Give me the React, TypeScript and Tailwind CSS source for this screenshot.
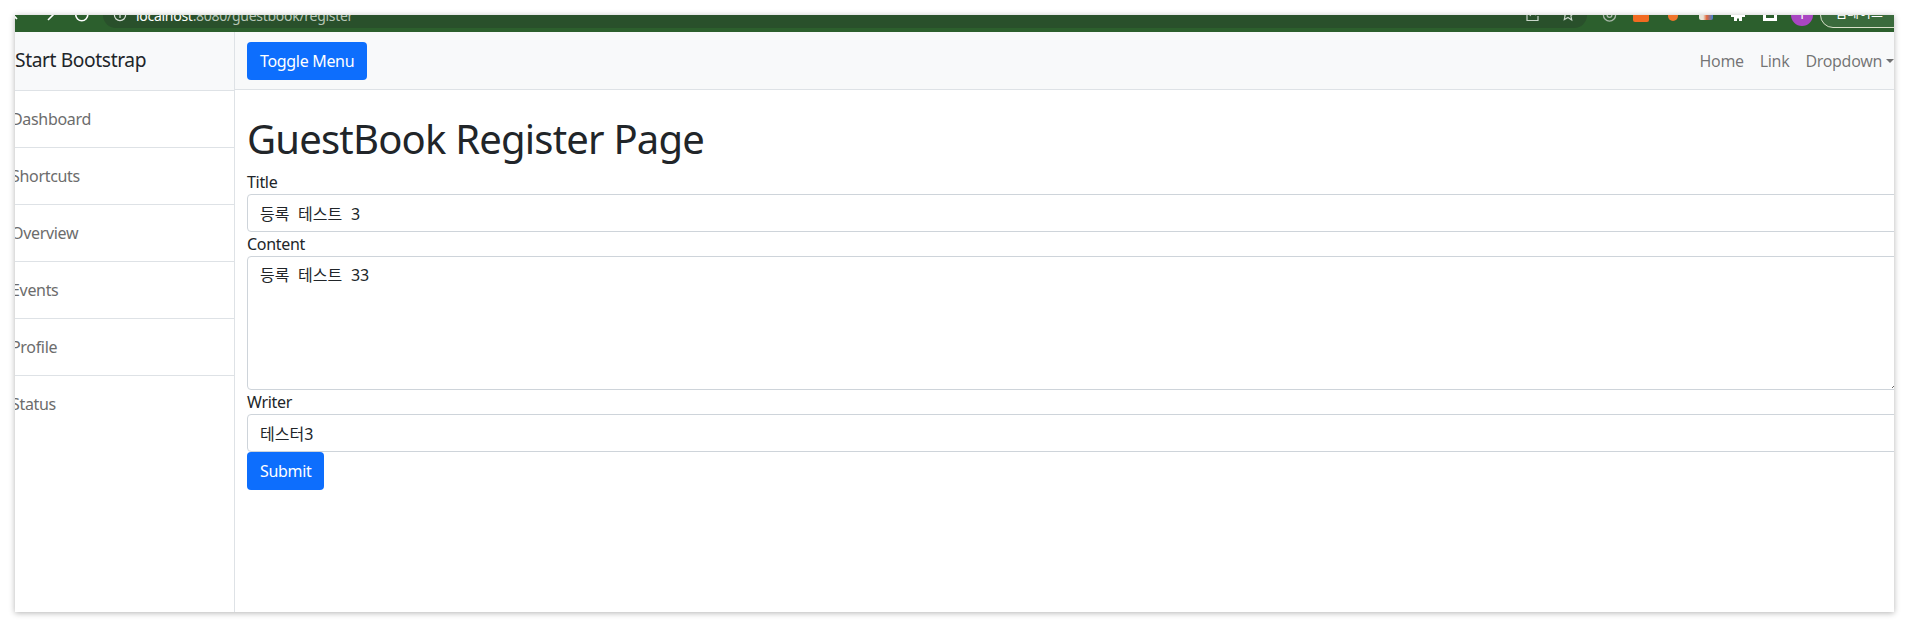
function ChromeBar() {
  return (
    <div className="h-[17px] shrink-0 overflow-hidden bg-[#2c5f2d]">
      <div className="-mt-[13px] flex h-[26px] items-center">
        <div className="flex h-[26px] w-[88px] shrink-0 items-center text-white">
          <svg width="88" height="26" viewBox="0 0 88 26" fill="none" stroke="#fff" strokeWidth="1.6">
            <path d="M-1 14 L2 17" />
            <path d="M33 8 L38 13 L33 18" />
            <path d="M71 8.5 A6 6 0 1 0 71 17 A6 6 0 0 0 71 8.5" />
          </svg>
        </div>
        <div className="flex h-[26px] w-[1484px] shrink-0 items-center rounded-[13px] bg-[#29502b] pl-[10px]">
          <svg width="14" height="14" viewBox="0 0 14 14" fill="none" stroke="#d7e0d7" strokeWidth="1.2" className="shrink-0">
            <circle cx="7" cy="7" r="5.6" />
            <path d="M7 6v4M7 3.5v1.2" />
          </svg>
          <span className="ml-[9px] text-[14px] tracking-[-0.02em] text-white">localhost<span className="text-[#b7c6b7]">:8080/guestbook/register</span></span>
          <div className="ml-auto flex items-center gap-[21px] pr-[12px]">
            <svg width="14" height="16" viewBox="0 0 14 16" fill="none" stroke="#c9d6c9" strokeWidth="1.2"><path d="M1 5v8.500h11V9M4 9c1-3 4-4 7-4M9 2l3 3-3 3" /></svg>
            <svg width="14" height="16" viewBox="0 0 14 16" fill="none" stroke="#c9d6c9" strokeWidth="1.2"><path d="M7 1.500l1.800 4 4.200.5-3.100 2.800.8 4.200L7 10.500l-3.700 2 .8-4.200L1 6l4.200-.5z" /></svg>
          </div>
        </div>
        <svg className="ml-[15px] shrink-0" width="15" height="16" viewBox="0 0 16 16" fill="none" stroke="#a9b8a9" strokeWidth="1.4"><circle cx="8" cy="8" r="6.500" /><circle cx="8" cy="8" r="2.500" /></svg>
        <div className="ml-[16px] h-[14px] w-[16px] shrink-0 rounded-[2px] bg-[#f26a21]" />
        <div className="ml-[19px] h-[12px] w-[10px] shrink-0 rounded-full bg-[#f0752b]" />
        <div className="ml-[21px] h-[10px] w-[14px] shrink-0 rounded-[2px] bg-[linear-gradient(90deg,#e8e3d8_30%,#e2673a_55%,#3e7fd6_100%)]" />
        <svg className="ml-[18px] shrink-0" width="14" height="12" viewBox="0 0 14 12" fill="#fff"><path d="M0 0h14v8h-3v4H8V9.500H6V12H3V8H0z" /></svg>
        <div className="ml-[18px] h-[11px] w-[14px] shrink-0 border-[3px] border-white" />
        <div className="ml-[14px] flex h-[22px] w-[22px] shrink-0 items-center justify-center rounded-full bg-[#a946c2] text-[13px] text-white">T</div>
        <div className="ml-[7px] flex h-[26px] w-[100px] shrink-0 items-center rounded-full border border-[#d8dfc9] bg-[#3a6b3c] pb-[4px] pl-[14px] text-[13px] text-white">업데이트</div>
      </div>
    </div>
  );
}

const items = ["Dashboard", "Shortcuts", "Overview", "Events", "Profile", "Status"];

function Sidebar() {
  return (
    <aside className="-ml-[20px] w-[240px] shrink-0 border-r border-[#dee2e6] bg-white">
      <div className="h-[59px] border-b border-[#dee2e6] bg-[#f8f9fa] px-[20px] py-[14px] text-[19.2px] leading-[28.8px] tracking-[-0.02em] text-[#212529]">
        Start Bootstrap
      </div>
      {items.map((t) => (
        <div key={t} className="h-[57px] border-b border-[#dee2e6] p-[16px] leading-[24px] tracking-[-0.02em] text-[#6c6c6c] last:border-b-0">
          {t}
        </div>
      ))}
    </aside>
  );
}

const fieldClass =
  "block w-full rounded-[4px] border border-[#ced4da] bg-white px-[12px] py-[6px] leading-[24px] text-[#212529] outline-none [word-spacing:4.5px]";

function Field({ label, value }: { label: string; value: string }) {
  return (
    <div>
      <label className="block leading-[24px] tracking-[-0.02em]">{label}</label>
      <input readOnly value={value} className={`h-[38px] ${fieldClass}`} />
    </div>
  );
}

export default function App() {
  return (
    <div
      className="h-[627px] w-[1909px] overflow-hidden bg-white p-[15px] text-[16px] text-[#212529]"
      style={{ fontFamily: '"Noto Sans", "Noto Sans CJK KR", sans-serif' }}
    >
      <div className="flex h-[597px] w-[1879px] flex-col overflow-hidden bg-white shadow-[0_1px_6px_rgba(0,0,0,0.3)]">
        <ChromeBar />
        <div className="flex min-h-0 flex-1">
          <Sidebar />
          <main className="min-w-0 flex-1">
            <nav className="flex h-[58px] items-center justify-between border-b border-[#dee2e6] bg-[#f8f9fa] pl-[12px]">
              <button className="h-[38px] rounded-[4px] bg-[#0d6efd] px-[13px] leading-[24px] tracking-[-0.02em] text-white">Toggle Menu</button>
              <ul className="flex items-center tracking-[-0.02em] text-black/55">
                <li className="px-[8px] leading-[24px]">Home</li>
                <li className="px-[8px] leading-[24px]">Link</li>
                <li className="flex items-center pl-[8px] leading-[24px]">
                  Dropdown
                  <span className="ml-[4px] h-0 w-0 border-x-[4.8px] border-t-[4.8px] border-x-transparent border-t-black/55" />
                </li>
              </ul>
            </nav>
            <div className="-mr-[7px] pl-[12px]">
              <h1 className="mb-[7px] mt-[25px] text-[40px] font-normal leading-[48px] tracking-[-0.02em]">GuestBook Register Page</h1>
              <form>
                <Field label="Title" value="등록 테스트 3" />
                <div>
                  <label className="block leading-[24px] tracking-[-0.02em]">Content</label>
                  <textarea readOnly value="등록 테스트 33" className={`h-[134px] ${fieldClass}`} />
                </div>
                <Field label="Writer" value="테스터3" />
                <button type="button" className="block h-[38px] rounded-[4px] bg-[#0d6efd] px-[13px] leading-[24px] tracking-[-0.02em] text-white">Submit</button>
              </form>
            </div>
          </main>
        </div>
      </div>
    </div>
  );
}
